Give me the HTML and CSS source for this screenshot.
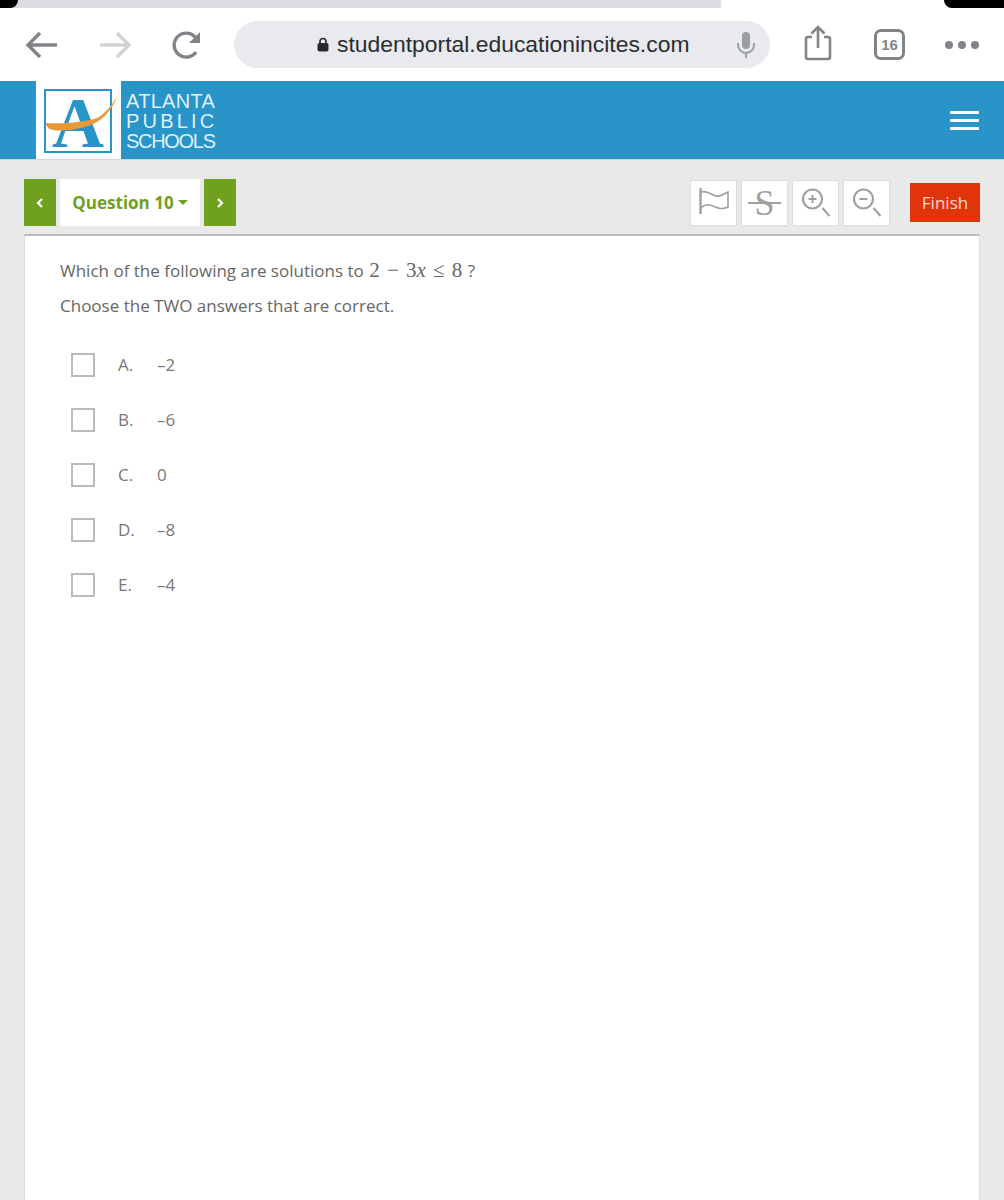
FILE: index.html

```html
<!DOCTYPE html>
<html lang="en">
<head>
  <meta charset="UTF-8" />
  <title>Atlanta Public Schools</title>
  <link rel="stylesheet" href="styles.css">
</head>
<body>
  <div class="tab-strip">
    <div class="tab-corner left"></div>
    <div class="tab-corner right"></div>
  </div>

  <div class="browser-bar">
    <svg class="nav-back" width="34" height="30" viewBox="0 0 34 30"><path d="M32 15H3M15 3 3 15l12 12" fill="none" stroke="#808488" stroke-width="3.4"/></svg>
    <svg class="nav-forward" width="34" height="30" viewBox="0 0 34 30"><path d="M2 15h29M19 3l12 12-12 12" fill="none" stroke="#d2d3d5" stroke-width="3.4"/></svg>
    <svg class="nav-reload" width="30" height="30" viewBox="0 0 30 30"><path d="M24 22a12 12 0 1 1-1-15l3 3" fill="none" stroke="#808488" stroke-width="3.4"/><path d="M28 2v11H17z" fill="#808488"/></svg>
    <div class="url-pill">
      <svg class="lock" width="12" height="15" viewBox="0 0 12 15"><path d="M3 7V4.500a3 3 0 0 1 6 0V7" fill="none" stroke="#26282b" stroke-width="1.700"/><rect x="0.500" y="6" width="11" height="8.500" rx="2" fill="#26282b"/></svg>
      <span class="url-text">studentportal.educationincites.com</span>
      <svg class="mic" width="20" height="28" viewBox="0 0 20 28"><rect x="6" y="1" width="8" height="17" rx="4" fill="#9a9da1"/><path d="M2 12v2a8 8 0 0 0 16 0v-2M10 22v5" fill="none" stroke="#9a9da1" stroke-width="2"/></svg>
    </div>
    <svg class="share" width="28" height="36" viewBox="0 0 28 36"><path d="M8 12H4a2 2 0 0 0-2 2v18a2 2 0 0 0 2 2h20a2 2 0 0 0 2-2V14a2 2 0 0 0-2-2h-4" fill="none" stroke="#808488" stroke-width="2.600"/><path d="M14 23V3M7.500 8.500 14 2l6.500 6.500" fill="none" stroke="#808488" stroke-width="2.600"/></svg>
    <div class="tab-count">16</div>
    <div class="more-dots"><span></span><span></span><span></span></div>
  </div>

  <header class="site-header">
    <div class="logo-box">
      <div class="logo-frame">
        <span class="logo-letter">A</span>
        <svg class="logo-swoosh" width="76" height="50" viewBox="0 0 76 50"><path d="M1 34c19 1 39-1 51-5C60 25 68 15 73 6c-5 12-11 21-21 27-10 6-30 10-44 8-5-1-7-4-7-7z" fill="#e89a3a"/></svg>
      </div>
    </div>
    <div class="logo-text">
      <span class="atlanta">ATLANTA</span>
      <span class="public">PUBLIC</span>
      <span class="schools">SCHOOLS</span>
    </div>
    <div class="menu-btn"><span></span><span></span><span></span></div>
  </header>

  <div class="test-bar">
    <div class="question-nav">
      <div class="nav-btn">
        <svg width="8" height="12" viewBox="0 0 8 12"><path d="M6 2 2 6l4 4" fill="none" stroke="#fff" stroke-width="2.200"/></svg>
      </div>
      <div class="question-select">Question 10 <span class="caret"></span></div>
      <div class="nav-btn">
        <svg width="8" height="12" viewBox="0 0 8 12"><path d="m2 2 4 4-4 4" fill="none" stroke="#fff" stroke-width="2.200"/></svg>
      </div>
    </div>
    <div class="tools">
      <div class="tool-btn">
        <svg width="32" height="30" viewBox="0 0 32 30"><path d="M2.500 0v26" stroke="#a0a0a0" stroke-width="2.400" fill="none"/><path d="M3 4c5-2 9 2 15 4 4 1 8-2 12-4v15c-6 3-10 1-15-1-5-2-8-2-12 2" fill="none" stroke="#a0a0a0" stroke-width="1.600"/></svg>
      </div>
      <div class="tool-btn">
        <span class="strike">S</span>
      </div>
      <div class="tool-btn">
        <svg width="32" height="34" viewBox="0 0 32 34"><circle cx="12.500" cy="13" r="9.500" fill="none" stroke="#a0a0a0" stroke-width="2.200"/><path d="M8.500 13h8M12.500 9v8" stroke="#a0a0a0" stroke-width="2"/><path d="m22.500 22 7 8" stroke="#a0a0a0" stroke-width="2"/></svg>
      </div>
      <div class="tool-btn">
        <svg width="32" height="34" viewBox="0 0 32 34"><circle cx="12.500" cy="13" r="9.500" fill="none" stroke="#a0a0a0" stroke-width="2.200"/><path d="M8.500 13h8" stroke="#a0a0a0" stroke-width="2"/><path d="m22.500 22 7 8" stroke="#a0a0a0" stroke-width="2"/></svg>
      </div>
      <div class="finish-btn">Finish</div>
    </div>
  </div>

  <main class="question-card">
    <p class="prompt">Which of the following are solutions to <span class="math">2 − 3<i>x</i> ≤ 8</span> ?</p>
    <p class="prompt second">Choose the TWO answers that are correct.</p>
    <ul class="answers">
      <li class="answer"><span class="checkbox"></span><span class="letter">A.</span><span>–2</span></li>
      <li class="answer"><span class="checkbox"></span><span class="letter">B.</span><span>–6</span></li>
      <li class="answer"><span class="checkbox"></span><span class="letter">C.</span><span>0</span></li>
      <li class="answer"><span class="checkbox"></span><span class="letter">D.</span><span>–8</span></li>
      <li class="answer"><span class="checkbox"></span><span class="letter">E.</span><span>–4</span></li>
    </ul>
  </main>
</body>
</html>
```

FILE: styles.css

```css
* {
  box-sizing: border-box;
}

html, body {
  height: 1200px;
  overflow: hidden;
}

body {
  font-family: 'Open Sans', sans-serif;
  background-color: #e9e9e9;
  color: #666;
  margin: 0;
  padding: 0;
}

.tab-strip {
  height: 8px;
  background: linear-gradient(to right, #dcdce0 720px, #fff 722px);
  position: relative;
}

.tab-corner {
  position: absolute;
  top: 0;
  height: 8px;
  background: #000;
}

.tab-corner.left {
  left: 0;
  width: 18px;
  border-bottom-right-radius: 10px;
}

.tab-corner.right {
  right: 0;
  width: 60px;
  border-bottom-left-radius: 12px;
}

.browser-bar {
  height: 73px;
  background: #fff;
  display: flex;
  align-items: center;
  padding: 0 0 0 25px;
}

.nav-forward {
  margin-left: 39px;
}

.nav-reload {
  margin-left: 40px;
}

.url-pill {
  width: 536px;
  height: 47px;
  margin-left: 32px;
  border-radius: 24px;
  background: #e8eaed;
  display: flex;
  align-items: center;
  padding-left: 83px;
}

.lock {
  margin-right: 8px;
}

.url-text {
  font-family: 'Liberation Sans', sans-serif;
  font-size: 22.900px;
  color: #2b2d30;
  width: 399px;
  white-space: nowrap;
}

.mic {
  flex-shrink: 0;
}

.share {
  margin-left: 34px;
  margin-top: -4px;
}

.tab-count {
  width: 31px;
  height: 31px;
  margin-left: 42px;
  border: 3px solid #808488;
  border-radius: 7px;
  color: #808488;
  font-family: 'Liberation Sans', sans-serif;
  font-size: 15px;
  font-weight: 700;
  display: flex;
  align-items: center;
  justify-content: center;
}

.more-dots {
  display: flex;
  gap: 5px;
  margin-left: 40px;
}

.more-dots span {
  width: 8px;
  height: 8px;
  border-radius: 50%;
  background: #808488;
}

.site-header {
  height: 78px;
  background-color: #2994c8;
  box-shadow: 0 1px 0 #d5d5d5;
  display: flex;
  align-items: center;
  padding-left: 36px;
}

.logo-box {
  width: 85px;
  height: 78px;
  background: #fff;
  padding: 8px 9px 6px 8px;
}

.logo-frame {
  width: 68px;
  height: 64px;
  border: 2px solid #2994c8;
  position: relative;
}

.logo-letter {
  position: absolute;
  left: 0;
  right: 0;
  top: -4px;
  text-align: center;
  font-family: 'Liberation Serif', serif;
  font-weight: 700;
  font-size: 72px;
  line-height: 72px;
  color: #2994c8;
}

.logo-swoosh {
  position: absolute;
  left: -1px;
  top: -2px;
}

.logo-text {
  margin-left: 5px;
  margin-top: 2px;
  display: flex;
  flex-direction: column;
  font-family: 'Liberation Sans', sans-serif;
  font-size: 20px;
  line-height: 20px;
  color: #dff1fa;
  width: 92px;
}

.logo-text .atlanta {
  letter-spacing: 0.3px;
}

.logo-text .public {
  letter-spacing: 3.200px;
}

.logo-text .schools {
  letter-spacing: -1.300px;
}

.menu-btn {
  margin-left: auto;
  margin-right: 25px;
  width: 29px;
  display: flex;
  flex-direction: column;
  gap: 5px;
}

.menu-btn span {
  height: 3px;
  background: #fff;
  border-radius: 1px;
}

.test-bar {
  display: flex;
  justify-content: space-between;
  padding: 20px 24px 0;
  height: 75px;
}

.question-nav {
  display: flex;
  gap: 4px;
  height: 47px;
}

.nav-btn {
  width: 32px;
  background-color: #6fa01e;
  display: flex;
  align-items: center;
  justify-content: center;
}

.question-select {
  width: 140px;
  background: #fff;
  color: #6fa01e;
  font-size: 17px;
  font-weight: 700;
  display: flex;
  align-items: center;
  justify-content: center;
  gap: 4px;
}

.caret {
  width: 0;
  height: 0;
  border-left: 5px solid transparent;
  border-right: 5px solid transparent;
  border-top: 5px solid #6fa01e;
}

.tools {
  display: flex;
  align-items: flex-start;
  gap: 4px;
  padding-top: 1px;
}

.tool-btn {
  width: 47px;
  height: 46px;
  background: #fff;
  border: 1px solid #ddd;
  display: flex;
  align-items: center;
  justify-content: center;
}

.strike {
  font-family: 'Liberation Serif', serif;
  font-size: 36px;
  line-height: 36px;
  color: #a0a0a0;
  position: relative;
}

.strike::after {
  content: "";
  position: absolute;
  left: -6px;
  right: -6px;
  top: 17px;
  height: 2px;
  background: #a0a0a0;
}

.finish-btn {
  width: 70px;
  height: 39px;
  margin-top: 3px;
  margin-left: 16px;
  background-color: #e0340c;
  color: #fbd9cf;
  font-size: 17px;
  display: flex;
  align-items: center;
  justify-content: center;
}

.question-card {
  margin: 0 24px;
  height: 1000px;
  background: #fff;
  border-top: 2px solid #bbb;
  border-left: 1px solid #ddd;
  border-right: 1px solid #ddd;
  padding: 20px 35px;
}

.prompt {
  font-size: 17px;
  line-height: 28px;
  margin: 0;
  color: #666;
}

.prompt.second {
  margin-top: 7px;
}

.math {
  font-family: 'Liberation Serif', serif;
  font-size: 21px;
  word-spacing: 2px;
  margin: 0 1px;
}

.answers {
  list-style: none;
  margin: 17px 0 0;
  padding: 0 0 0 11px;
}

.answer {
  height: 55px;
  display: flex;
  align-items: center;
  font-size: 17px;
  color: #777;
}

.checkbox {
  width: 24px;
  height: 24px;
  border: 2px solid #bbb;
  margin-right: 23px;
  flex-shrink: 0;
}

.letter {
  width: 39px;
}
```
